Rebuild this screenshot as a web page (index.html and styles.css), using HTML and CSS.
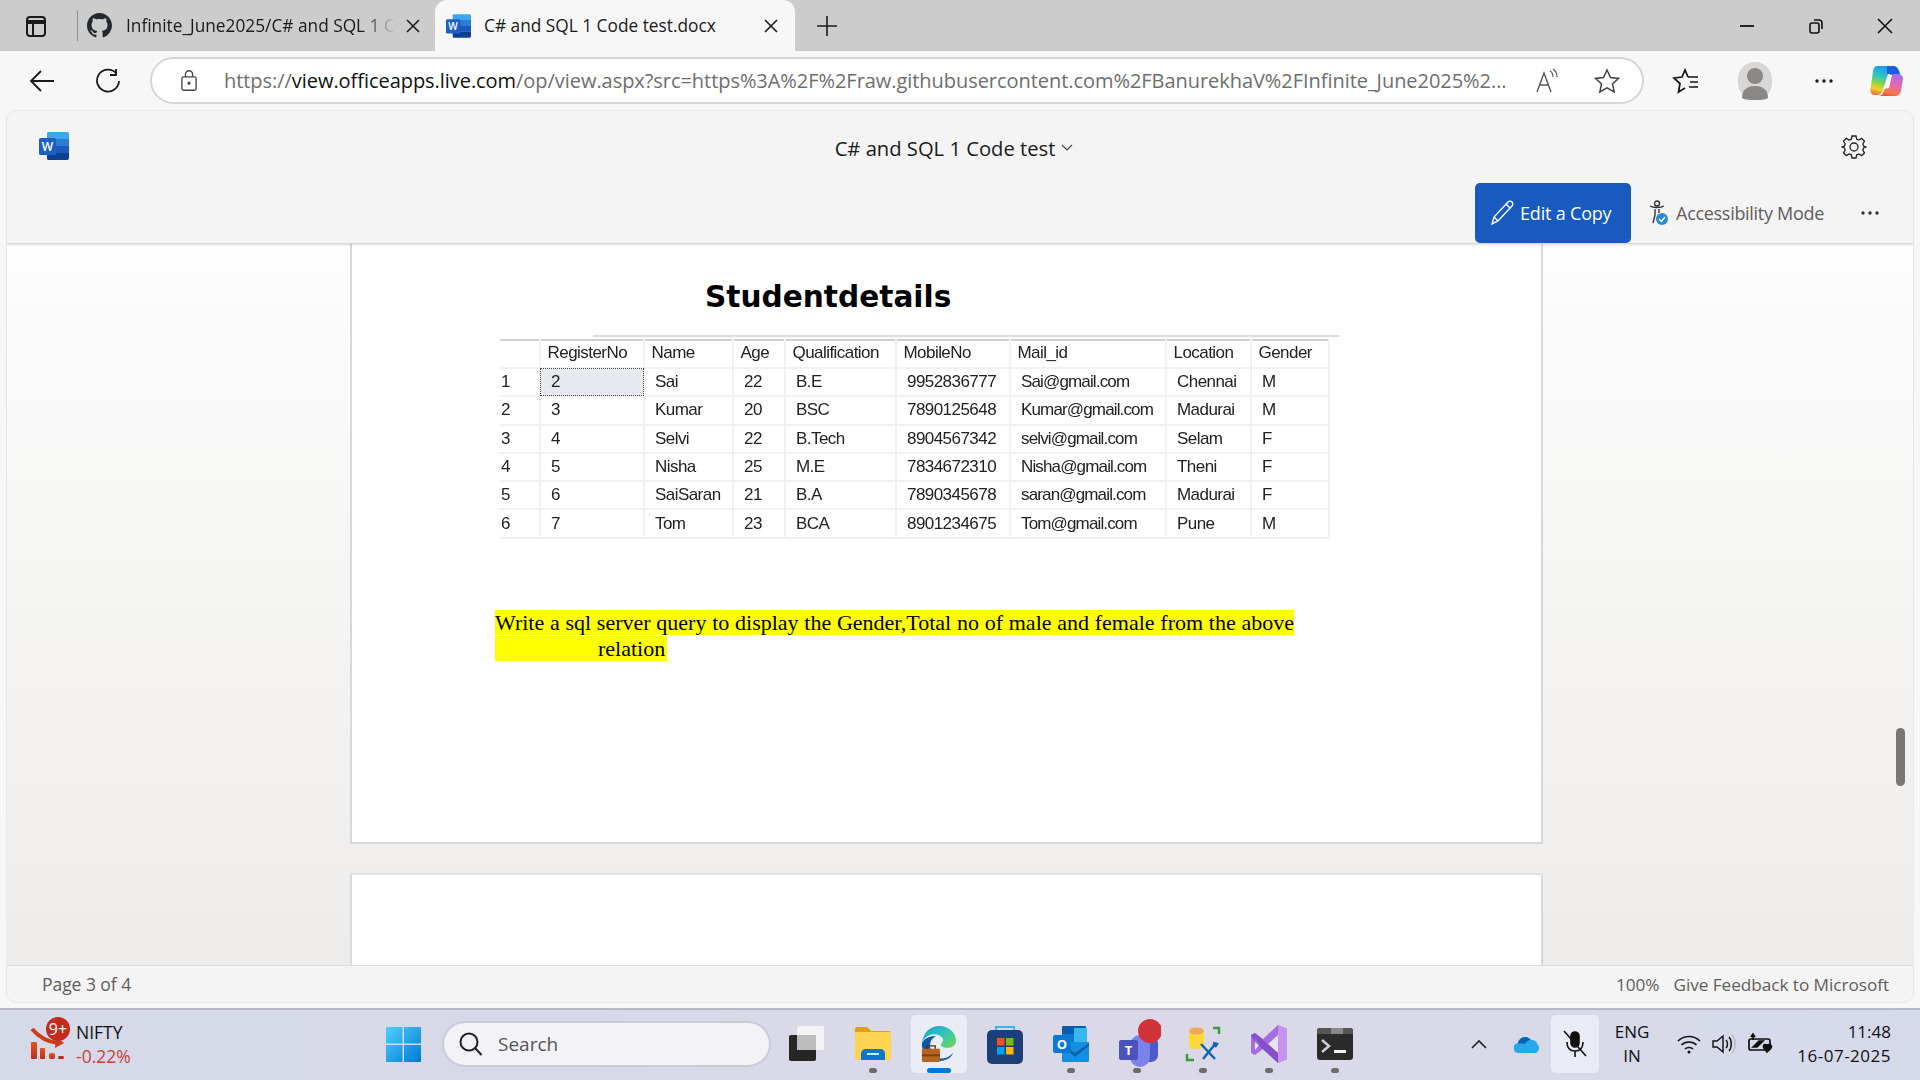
FILE: index.html
```html
<!DOCTYPE html>
<html lang="en">
<head>
    <meta charset="UTF-8">
    <meta name="viewport" content="width=device-width, initial-scale=1.0">
    <title>C# and SQL 1 Code test</title>
    <link rel="stylesheet" href="styles.css">
</head>
<body>
    <svg class="defs" width="0" height="0">
        <defs>
            <symbol id="word" viewBox="0 0 30 28">
                <path d="M9 0h19a2 2 0 0 1 2 2v6H8V1z" fill="#41a5ee"/>
                <rect x="8" y="7" width="22" height="7" fill="#2b7cd3"/>
                <rect x="8" y="14" width="22" height="7" fill="#185abd"/>
                <path d="M8 21h22v5a2 2 0 0 1-2 2H9l-1-1z" fill="#103f91"/>
                <rect x="0" y="6" width="17" height="17" rx="1.5" fill="#1e5fc4"/>
                <text x="8.5" y="19" text-anchor="middle" class="word-w">W</text>
            </symbol>
        </defs>
    </svg>

    <div class="tabstrip">
        <div class="side-btn">
            <svg width="24" height="24" viewBox="0 0 24 24" fill="none" stroke="#1a1a1a" stroke-width="2"><rect x="3" y="3" width="18" height="19" rx="3"/><path d="M3 8h18" stroke-width="4"/><path d="M9 8v14"/></svg>
        </div>
        <div class="tab">
            <svg class="tab-icon" width="25" height="25" viewBox="0 0 16 16" fill="#24292f"><path d="M8 0C3.58 0 0 3.58 0 8c0 3.54 2.29 6.53 5.47 7.59.4.07.55-.17.55-.38 0-.19-.01-.82-.01-1.49-2.01.37-2.53-.49-2.69-.94-.09-.23-.48-.94-.82-1.13-.28-.15-.68-.52-.01-.53.63-.01 1.08.58 1.23.82.72 1.21 1.87.87 2.33.66.07-.52.28-.87.51-1.07-1.78-.2-3.64-.89-3.64-3.95 0-.87.31-1.59.82-2.15-.08-.2-.36-1.02.08-2.12 0 0 .67-.21 2.2.82.64-.18 1.32-.27 2-.27s1.36.09 2 .27c1.53-1.04 2.2-.82 2.2-.82.44 1.1.16 1.92.08 2.12.51.56.82 1.27.82 2.15 0 3.07-1.87 3.75-3.65 3.95.29.25.54.73.54 1.48 0 1.07-.01 1.93-.01 2.2 0 .21.15.46.55.38A8.013 8.013 0 0016 8c0-4.42-3.58-8-8-8z"/></svg>
            <span class="tab-title tab-title-fade">Infinite_June2025/C# and SQL 1 C</span>
            <svg class="tab-close" width="14" height="14" viewBox="0 0 14 14" stroke="#1a1a1a" stroke-width="1.6"><path d="M1 1l12 12M13 1L1 13"/></svg>
        </div>
        <div class="tab tab-active">
            <svg class="tab-icon" width="25" height="24"><use href="#word"/></svg>
            <span class="tab-title">C# and SQL 1 Code test.docx</span>
            <svg class="tab-close" width="14" height="14" viewBox="0 0 14 14" stroke="#1a1a1a" stroke-width="1.6"><path d="M1 1l12 12M13 1L1 13"/></svg>
        </div>
        <div class="new-tab">
            <svg width="22" height="22" viewBox="0 0 22 22" stroke="#1a1a1a" stroke-width="1.6"><path d="M11 1v20M1 11h20"/></svg>
        </div>
        <div class="win-controls">
            <svg width="16" height="16" viewBox="0 0 16 16" stroke="#111" stroke-width="1.8"><path d="M1 8h14"/></svg>
            <svg width="16" height="16" viewBox="0 0 16 16" fill="none" stroke="#111" stroke-width="1.6"><rect x="2" y="5" width="9" height="10" rx="2"/><path d="M6 2h5a3 3 0 0 1 3 3v6"/></svg>
            <svg width="16" height="16" viewBox="0 0 16 16" stroke="#111" stroke-width="1.6"><path d="M1 1l14 14M15 1L1 15"/></svg>
        </div>
    </div>

    <div class="toolbar">
        <div class="tool-btn">
            <svg width="26" height="24" viewBox="0 0 26 24" fill="none" stroke="#1a1a1a" stroke-width="1.8"><path d="M25 12H2M12 2L2 12l10 10"/></svg>
        </div>
        <div class="tool-btn">
            <svg width="26" height="26" viewBox="0 0 26 26" fill="none" stroke="#1a1a1a" stroke-width="1.8"><path d="M21 5a11 11 0 1 0 3 8"/><path d="M21 1v6h-6"/></svg>
        </div>
        <div class="address">
            <svg class="lock" width="16" height="23" viewBox="0 0 18 24" fill="none" stroke="#444" stroke-width="1.5"><rect x="1" y="8" width="16" height="15" rx="2"/><path d="M5 8V5a4 4 0 0 1 8 0v3"/><circle cx="9" cy="15" r="1" fill="#444"/></svg>
            <span class="url"><span class="url-dim">https://</span><span class="url-host">view.officeapps.live.com</span><span class="url-dim">/op/view.aspx?src=https%3A%2F%2Fraw.githubusercontent.com%2FBanurekhaV%2FInfinite_June2025%2...</span></span>
            <svg class="read-aloud" width="26" height="26" viewBox="0 0 26 26" fill="none" stroke="#555" stroke-width="1.4"><path d="M3 24L10 5l7 19M5.500 17h9"/><path d="M16 3c2 1 3 3 3 6M19 1c3 2 4 4 4 8" stroke-width="1.200"/></svg>
            <svg class="star" width="26" height="26" viewBox="0 0 26 26" fill="none" stroke="#444" stroke-width="1.500"><path d="M13 2l3.400 7.500 8.100.9-6 5.500 1.700 8L13 19.800 5.800 23.900l1.700-8-6-5.500 8.100-.9z"/></svg>
        </div>
        <div class="tool-btn">
            <svg width="28" height="26" viewBox="0 0 28 26" fill="none" stroke="#111" stroke-width="1.700"><path d="M16 9l-3-7-3 7-8 1 6 5.500L6.500 24l6.500-4"/><path d="M16 9h10M18 14h8M17 19h9"/></svg>
        </div>
        <div class="tool-btn profile-slot">
            <svg width="34" height="38" viewBox="0 0 34 38"><rect width="34" height="38" rx="17" fill="#d8d7d5"/><circle cx="17" cy="14" r="8" fill="#8a8886"/><path d="M4 36c0-9 6-12 13-12s13 3 13 12c-3 2-8 2-13 2s-10 0-13-2z" fill="#8a8886"/></svg>
        </div>
        <div class="tool-btn">
            <svg width="20" height="6" viewBox="0 0 20 6" fill="#1a1a1a"><circle cx="3" cy="3" r="1.700"/><circle cx="10" cy="3" r="1.700"/><circle cx="17" cy="3" r="1.700"/></svg>
        </div>
        <div class="tool-btn copilot-slot">
            <svg width="34" height="32" viewBox="0 0 34 32">
                <defs>
                    <linearGradient id="cp1" x1="0.5" y1="0" x2="0.3" y2="1"><stop offset="0" stop-color="#1c9cf0"/><stop offset=".35" stop-color="#2fc6c0"/><stop offset=".6" stop-color="#8fd43c"/><stop offset=".8" stop-color="#f2cf2c"/><stop offset="1" stop-color="#f2703a"/></linearGradient>
                    <linearGradient id="cp3" x1="0.7" y1="0" x2="0.3" y2="1"><stop offset="0" stop-color="#a76ae8"/><stop offset=".45" stop-color="#e46ab0"/><stop offset=".8" stop-color="#f47a4a"/><stop offset="1" stop-color="#f0503c"/></linearGradient>
                </defs>
                <path d="M7 1h14l-4 11-4 13c-1 3-3 5-6 5H5c-3 0-5-2-4.500-6L3 6C3.500 3 5 1 7 1z" fill="url(#cp1)"/>
                <path d="M17 1h7c3 0 5 4 6 8H17z" fill="#1a5fe0"/>
                <path d="M20 9h8c3 0 5 2 5 5l-2 12c-.5 3-3 5-6 5H8c3 0 5-2 6-5l3-8z" fill="url(#cp3)"/>
                <path d="M19 10h3l-3 13-6 1z" fill="#fbfbfb"/>
            </svg>
        </div>
    </div>

    <div class="viewer">
        <div class="viewer-head">
            <div class="title-row">
                <svg class="app-icon" width="30" height="28"><use href="#word"/></svg>
                <div class="doc-title">C# and SQL 1 Code test
                    <svg width="12" height="8" viewBox="0 0 12 8" fill="none" stroke="#444" stroke-width="1.100"><path d="M1 1l5 5 5-5"/></svg>
                </div>
                <svg class="gear" width="26" height="26" viewBox="0 0 26 26" fill="none" stroke="#222" stroke-width="1.300"><path d="M11 2h4l.7 3.200 2.200.9 2.800-1.700 2.800 2.800-1.700 2.800.9 2.200L25 13v0l-2.300.8-.9 2.200 1.700 2.800-2.800 2.800-2.800-1.700-2.200.9L15 24h-4l-.7-3.200-2.200-.9-2.800 1.700-2.800-2.800 1.700-2.800-.9-2.200L1 13v0l2.300-.8.9-2.200-1.700-2.800 2.800-2.800 2.800 1.700 2.200-.9z"/><circle cx="13" cy="13" r="4"/></svg>
            </div>
            <div class="command-row">
                <button class="edit-btn">
                    <svg width="25" height="26" viewBox="0 0 25 26" fill="none" stroke="#fff" stroke-width="1.400"><path d="M2 24l2-7L18 2c1-1 3-1 4 0s1 3 0 4L8 21zM4 17l4 4M16 4l4 4"/></svg>
                    Edit a Copy
                </button>
                <div class="access-btn">
                    <svg width="22" height="26" viewBox="0 0 22 26" fill="none" stroke="#333" stroke-width="1.400"><circle cx="9" cy="3.500" r="2.500"/><path d="M2 6c3 2 11 2 14 0M7 9v6l-2 8M11 9v4"/><circle cx="14" cy="19" r="6" fill="#2a8ad4" stroke="none"/><path d="M11 19l2.500 2.500L17 17" stroke="#fff"/></svg>
                    Accessibility Mode
                </div>
                <div class="more-btn">
                    <svg width="20" height="6" viewBox="0 0 20 6" fill="#333"><circle cx="3" cy="3" r="1.700"/><circle cx="10" cy="3" r="1.700"/><circle cx="17" cy="3" r="1.700"/></svg>
                </div>
            </div>
        </div>

        <div class="doc-area">
            <div class="page">
                <h2 class="sheet-title">Studentdetails</h2>
                <div class="grid-wrap">
                    <div class="grid-topline"></div>
                    <table class="grid">
                        <colgroup>
                            <col class="c0"><col class="c1"><col class="c2"><col class="c3"><col class="c4"><col class="c5"><col class="c6"><col class="c7"><col class="c8">
                        </colgroup>
                        <thead>
                            <tr><th></th><th>RegisterNo</th><th>Name</th><th>Age</th><th>Qualification</th><th>MobileNo</th><th>Mail_id</th><th>Location</th><th>Gender</th></tr>
                        </thead>
                        <tbody>
                            <tr><td class="rownum">1</td><td class="focused">2</td><td>Sai</td><td>22</td><td>B.E</td><td>9952836777</td><td class="mail">Sai@gmail.com</td><td>Chennai</td><td>M</td></tr>
                            <tr><td class="rownum">2</td><td>3</td><td>Kumar</td><td>20</td><td>BSC</td><td>7890125648</td><td class="mail">Kumar@gmail.com</td><td>Madurai</td><td>M</td></tr>
                            <tr><td class="rownum">3</td><td>4</td><td>Selvi</td><td>22</td><td>B.Tech</td><td>8904567342</td><td class="mail">selvi@gmail.com</td><td>Selam</td><td>F</td></tr>
                            <tr><td class="rownum">4</td><td>5</td><td>Nisha</td><td>25</td><td>M.E</td><td>7834672310</td><td class="mail">Nisha@gmail.com</td><td>Theni</td><td>F</td></tr>
                            <tr><td class="rownum">5</td><td>6</td><td>SaiSaran</td><td>21</td><td>B.A</td><td>7890345678</td><td class="mail">saran@gmail.com</td><td>Madurai</td><td>F</td></tr>
                            <tr><td class="rownum">6</td><td>7</td><td>Tom</td><td>23</td><td>BCA</td><td>8901234675</td><td class="mail">Tom@gmail.com</td><td>Pune</td><td>M</td></tr>
                        </tbody>
                    </table>
                </div>
                <div class="question">
                    <div class="q-line q-first"><span>Write</span><span>a</span><span>sql</span><span>server</span><span>query</span><span>to</span><span>display</span><span>the</span><span>Gender,Total</span><span>no</span><span>of</span><span>male</span><span>and</span><span>female</span><span>from</span><span>the</span><span>above</span></div>
                    <div class="q-line q-second">relation</div>
                </div>
            </div>
            <div class="page page-next"></div>
            <div class="scroll-thumb"></div>
        </div>

        <div class="status">
            <span>Page 3 of 4</span>
            <span class="status-right"><span>100%</span><span>Give Feedback to Microsoft</span></span>
        </div>
    </div>

    <div class="taskbar">
        <div class="widget">
            <svg width="36" height="36" viewBox="0 0 36 36">
                <defs><linearGradient id="bars" x1="0" y1="0" x2="0" y2="1"><stop offset="0" stop-color="#e2571a"/><stop offset="1" stop-color="#c42b1c"/></linearGradient></defs>
                <path d="M3 3c7 8 15 13 26 14" fill="none" stroke="#cf3a18" stroke-width="4"/>
                <path d="M27 11l8 6-9 5z" fill="#cf3a18"/>
                <rect x="2" y="16" width="6" height="17" rx="1" fill="url(#bars)"/>
                <rect x="11" y="22" width="5" height="11" rx="1" fill="url(#bars)"/>
                <rect x="20" y="27" width="6" height="6" rx="2" fill="url(#bars)"/>
                <rect x="29" y="30" width="6" height="3" rx="1.500" fill="#b5281a"/>
            </svg>
            <span class="badge">9+</span>
            <div class="widget-text">
                <span>NIFTY</span>
                <span class="widget-down">-0.22%</span>
            </div>
        </div>
        <svg class="start" width="35" height="35" viewBox="0 0 35 35">
            <defs><linearGradient id="win" x1="0" y1="0" x2="1" y2="1"><stop offset="0" stop-color="#4fd0fb"/><stop offset="1" stop-color="#0078d4"/></linearGradient></defs>
            <path d="M1 0h15.500v16.500H0V1a1 1 0 0 1 1-1zM18 0h16a1 1 0 0 1 1 1v15.500H18zM0 18h16.500v17H1a1 1 0 0 1-1-1zM18 18h17v16a1 1 0 0 1-1 1H18z" fill="url(#win)"/>
        </svg>
        <div class="search">
            <svg width="26" height="26" viewBox="0 0 26 26" fill="none" stroke="#222" stroke-width="2"><circle cx="11" cy="11" r="8.500"/><path d="M17 17l6.500 7"/></svg>
            <span>Search</span>
        </div>
        <div class="task-icons">
            <div class="task-item">
                <svg width="36" height="36" viewBox="0 0 36 36"><rect x="8" y="0" width="27" height="24" rx="2" fill="#f3f3f5"/><rect x="0" y="9" width="27" height="26" rx="2" fill="#262626"/><rect x="8" y="9" width="19" height="15" fill="#bdbdbd"/></svg>
            </div>
            <div class="task-item has-dot">
                <svg width="38" height="38" viewBox="0 0 38 38"><path d="M1 4a2 2 0 0 1 2-2h10l4 4h18a2 2 0 0 1 2 2v3H1z" fill="#e0a000"/><rect x="1" y="7" width="36" height="28" rx="1" fill="#ffd452"/><path d="M7 35v-6c0-3 2-5 5-5h14c3 0 5 2 5 5v6z" fill="#0a78c8"/><rect x="13" y="28" width="12" height="2" fill="#d7ecfa"/></svg>
            </div>
            <div class="task-item task-active">
                <svg width="36" height="36" viewBox="0 0 38 38">
                    <defs><linearGradient id="edge" x1="0" y1="0" x2="1" y2="1"><stop offset="0" stop-color="#0f9ed8"/><stop offset=".5" stop-color="#36c5b8"/><stop offset="1" stop-color="#6fd84f"/></linearGradient></defs>
                    <path d="M1 18C2 7 10 0 19 0c11 0 18 8 18 15 0 6-5 8-9 8-5 0-8-2-7-4 2-2 4-5 0-8C15 6 4 9 1 18z" fill="url(#edge)"/>
                    <path d="M1 18c3-6 10-8 15-7-6 2-7 7-6 13 1 5 5 9 11 10C10 35 0 29 1 18z" fill="#0c59a4"/>
                    <path d="M20 34c6 1 11-2 14-6-2 6-8 9-16 9z" fill="#0c59a4"/>
                    <rect x="1" y="24" width="19" height="14" rx="1" fill="#b5651d"/><rect x="1" y="30" width="19" height="2" fill="#7a3e10"/><path d="M6 24v-3h9v3" fill="none" stroke="#5c3210" stroke-width="1.500"/>
                </svg>
            </div>
            <div class="task-item">
                <svg width="36" height="40" viewBox="0 0 36 40"><path d="M9 8V3h18v5" fill="none" stroke="#35b8e8" stroke-width="2"/><rect y="6" width="36" height="34" rx="5" fill="#1d3f78"/><rect x="10" y="14" width="7.500" height="7.500" fill="#f25022"/><rect x="19" y="14" width="7.500" height="7.500" fill="#7fba00"/><rect x="10" y="23" width="7.500" height="7.500" fill="#00a4ef"/><rect x="19" y="23" width="7.500" height="7.500" fill="#ffb900"/></svg>
            </div>
            <div class="task-item has-dot">
                <svg width="36" height="36" viewBox="0 0 36 36"><rect x="9" y="0" width="24" height="10" rx="1" fill="#0a5ca8"/><rect x="9" y="8" width="12" height="12" fill="#0a78d4"/><rect x="21" y="2" width="13" height="18" fill="#35b8f0"/><path d="M9 16h27v19a1 1 0 0 1-1 1H10a1 1 0 0 1-1-1z" fill="#1490df"/><path d="M9 17l13 10 14-10v3L22 31 9 20z" fill="#0a64b0"/><rect y="9" width="18" height="18" rx="2" fill="#0a78d4"/><text x="9" y="23" text-anchor="middle" class="icon-letter">O</text></svg>
            </div>
            <div class="task-item has-dot">
                <svg width="48" height="50" viewBox="-6 0 48 50"><rect x="23" y="17" width="16" height="26" rx="7" fill="#5059c9"/><rect x="11" y="16" width="20" height="32" rx="10" fill="#7b83eb"/><rect x="0" y="21" width="19" height="20" rx="2" fill="#4b53bc"/><text x="9.500" y="36" text-anchor="middle" class="icon-letter">T</text><circle cx="31" cy="12" r="12" fill="#d13438"/></svg>
            </div>
            <div class="task-item has-dot">
                <svg width="36" height="36" viewBox="0 0 36 36" fill="none"><path d="M4 6c0-4 15-4 15 0v14c0 4-15 4-15 0z" fill="#ffd83b"/><ellipse cx="11.500" cy="5" rx="7.500" ry="3.500" fill="#f0a858"/><path d="M28 2h6v6M2 28v6h7" stroke="#3c9a3c" stroke-width="2.500"/><path d="M16 18l14 15M31 17L18 33M28 17l4 1-2 3" stroke="#0a64b0" stroke-width="2.400"/></svg>
            </div>
            <div class="task-item has-dot">
                <svg width="36" height="38" viewBox="0 0 36 38"><path d="M27 0l9 4v30l-9 4-15-14-8 6-4-2V10l4-2 8 6z" fill="#a56ee0"/><path d="M27 0l9 4v30l-9 4z" fill="#c594f0"/><path d="M27 10L17 19l10 9z" fill="#e8e4f5"/><path d="M4 13v12l5-6z" fill="#e8e4f5"/><path d="M0 10l4-2 23 20v10L4 17z" fill="#7a3fc0" opacity=".7"/></svg>
            </div>
            <div class="task-item has-dot">
                <svg width="36" height="32" viewBox="0 0 36 32"><rect width="36" height="32" rx="3" fill="#2b2b2b"/><path d="M0 3a3 3 0 0 1 3-3h11v6H0z" fill="#555"/><path d="M14 0h12v6H14z" fill="#888"/><path d="M26 0h7a3 3 0 0 1 3 3v3H26z" fill="#555"/><path d="M5 12l7 6-7 6" fill="none" stroke="#cfcfcf" stroke-width="2.500"/><rect x="17" y="22" width="12" height="3" fill="#f0f0f0"/></svg>
            </div>
        </div>
        <div class="tray">
            <div class="tray-item tray-chevron">
                <svg width="16" height="10" viewBox="0 0 16 10" fill="none" stroke="#222" stroke-width="1.600"><path d="M1 9l7-7 7 7"/></svg>
            </div>
            <div class="tray-item tray-cloud">
                <svg width="26" height="18" viewBox="0 0 26 18"><path d="M5 18a5 5 0 0 1-1-10c1-5 8-9 13-3 4 0 6 2 6 4 3 1 3 9-2 9z" fill="#28a8ea"/><path d="M4 8c1-5 8-9 13-3-3 0-5 2-6 4-4-1-6 0-7-1z" fill="#0364b8"/></svg>
            </div>
            <div class="tray-item tray-mic">
                <svg width="26" height="28" viewBox="0 0 26 28" fill="none" stroke="#111" stroke-width="1.600"><rect x="9" y="2" width="8" height="15" rx="4" fill="#111"/><path d="M5 12c0 6 3 9 8 9s8-3 8-9M13 21v6"/><path d="M2 1l22 25"/></svg>
            </div>
            <div class="tray-lang"><span>ENG</span><span>IN</span></div>
            <div class="tray-item tray-wifi">
                <svg width="24" height="20" viewBox="0 0 24 20" fill="none" stroke="#111" stroke-width="1.600"><path d="M1 7c6-6 16-6 22 0M4.500 11c4-4 11-4 15 0M8 15c2-2 6-2 8 0"/><circle cx="12" cy="18" r="1.500" fill="#111" stroke="none"/></svg>
            </div>
            <div class="tray-item tray-vol">
                <svg width="24" height="20" viewBox="0 0 24 20" fill="none" stroke="#111" stroke-width="1.400"><path d="M1 7h4l6-5v16l-6-5H1z"/><path d="M14 6c2 2 2 6 0 8M17 3c3 3 3 11 0 14"/><path d="M20 1c4 4 4 14 0 18" stroke="#bbb"/></svg>
            </div>
            <div class="tray-item tray-batt">
                <svg width="26" height="24" viewBox="0 0 26 24" fill="none" stroke="#111" stroke-width="1.700"><path d="M5 3v5M3 5l2-3 2 3"/><rect x="1" y="7" width="21" height="11" rx="2"/><path d="M5 15l6-6h4l-6 6z" fill="#111"/><path d="M16 16l3 4 4-4c2-3-3-5-4-2-1-3-5-1-3 2z" fill="#111"/></svg>
            </div>
            <div class="clock"><span>11:48</span><span class="clock-date">16-07-2025</span></div>
        </div>
    </div>
</body>
</html>
```

FILE: styles.css
```css
* {
    box-sizing: border-box;
}
html, body {
    height: 100%;
}
body {
    margin: 0;
    overflow: hidden;
    display: flex;
    flex-direction: column;
    background-color: #f7f7f7;
    color: #1a1a1a;
    font-family: "Open Sans", "Noto Sans", sans-serif;
}
svg {
    display: block;
    flex: none;
}
.defs {
    position: absolute;
}
.word-w {
    font-family: "Open Sans", sans-serif;
    font-size: 12px;
    font-weight: 600;
    fill: #fff;
}
.icon-letter {
    font-family: "Open Sans", sans-serif;
    font-size: 13px;
    font-weight: 700;
    fill: #fff;
}

/* tab strip */
.tabstrip {
    height: 51px;
    flex: none;
    display: flex;
    align-items: center;
    background-color: #cccccc;
}
.side-btn {
    width: 77px;
    height: 100%;
    display: flex;
    align-items: center;
    padding-left: 24px;
}
.tab {
    width: 358px;
    height: 100%;
    display: flex;
    align-items: center;
    padding-left: 10px;
    font-size: 17.3px;
    position: relative;
}
.tab::before {
    content: "";
    position: absolute;
    left: 0;
    top: 10px;
    bottom: 10px;
    width: 1px;
    background-color: #8f8f8f;
}
.tab-active {
    width: 360px;
    background-color: #f7f7f7;
    border-radius: 12px 12px 0 0;
    padding-left: 11px;
}
.tab-active::before {
    display: none;
}
.tab-icon {
    margin-right: 14px;
}
.tab-active .tab-icon {
    margin-right: 13px;
}
.tab-title {
    width: 269px;
    white-space: nowrap;
}
.tab-title-fade {
    -webkit-mask-image: linear-gradient(90deg, #000 88%, transparent);
    mask-image: linear-gradient(90deg, #000 88%, transparent);
}
.tab-close {
    margin-left: 11px;
}
.tab-active .tab-title {
    width: 280px;
}
.tab-active .tab-close {
    margin-left: 0;
}
.new-tab {
    width: 22px;
    margin-left: 21px;
}
.win-controls {
    margin-left: auto;
    display: flex;
    gap: 53px;
    padding-right: 27px;
}

/* address bar row */
.toolbar {
    height: 59px;
    flex: none;
    display: flex;
    align-items: center;
    padding-left: 9px;
}
.tool-btn {
    width: 66px;
    display: flex;
    justify-content: center;
}
.profile-slot {
    width: 72px;
}
.copilot-slot {
    width: 60px;
}
.address {
    width: 1494px;
    height: 47px;
    margin: 0 9px 0 9px;
    display: flex;
    align-items: center;
    padding-left: 29px;
    background-color: #fff;
    border: 2px solid #d6d6d6;
    border-radius: 24px;
}
.url {
    margin-left: 27px;
    width: 1281px;
    font-size: 20px;
    white-space: nowrap;
    letter-spacing: -0.05px;
}
.url-dim {
    color: #6e6e6e;
}
.url-host {
    color: #111;
}
.read-aloud {
    margin-left: 29px;
}
.star {
    margin-left: 34px;
}

/* word viewer */
.viewer {
    flex: none;
    height: 893px;
    margin: 0 6px 5px;
    display: flex;
    flex-direction: column;
    background-color: #f4f4f4;
    border: 1px solid #e8e8e8;
    border-radius: 10px;
    overflow: hidden;
}
.viewer-head {
    height: 133px;
    flex: none;
    border-bottom: 1px solid #d8d8d8;
    box-shadow: 0 1px 2px rgba(0, 0, 0, 0.12);
    position: relative;
    z-index: 1;
}
.title-row {
    height: 72px;
    display: flex;
    align-items: center;
    padding: 2px 46px 0 32px;
}
.app-icon {
    margin-top: -4px;
}
.gear {
    margin-top: -3px;
}
.doc-title {
    flex: 1;
    display: flex;
    align-items: center;
    justify-content: center;
    gap: 6px;
    padding-right: 2px;
    font-size: 20.2px;
}
.command-row {
    height: 60px;
    display: flex;
    align-items: stretch;
    justify-content: flex-end;
}
.edit-btn {
    width: 156px;
    display: flex;
    align-items: center;
    gap: 5px;
    padding: 0 0 0 15px;
    background-color: #185abd;
    color: #fff;
    border: none;
    border-radius: 5px;
    font-family: inherit;
    font-size: 18px;
    letter-spacing: -0.2px;
}
.access-btn {
    margin-left: 17px;
    display: flex;
    align-items: center;
    gap: 6px;
    color: #605e5c;
    font-size: 18px;
    letter-spacing: -0.3px;
}
.more-btn {
    width: 89px;
    display: flex;
    align-items: center;
    padding-left: 36px;
}

/* document */
.doc-area {
    flex: 1;
    min-height: 0;
    position: relative;
    overflow: hidden;
    padding: 0 370px 0 343px;
    background: linear-gradient(180deg, #fdfdfd, #edecea);
}
.page {
    height: 600px;
    background-color: #fff;
    border: 2px solid #d9d9dc;
    border-top: none;
    padding: 38px 0 0 143px;
}
.page-next {
    height: 100px;
    margin-top: 29px;
    border-top: 2px solid #e2e2e4;
}
.sheet-title {
    margin: 0 0 0 210px;
    font-family: "DejaVu Sans", Verdana, sans-serif;
    font-size: 29.6px;
    line-height: 30px;
    font-weight: 700;
    color: #000;
}
.grid-wrap {
    margin: 23px 0 0 5px;
    filter: blur(0.45px);
}
.grid-topline {
    height: 2px;
    margin-left: 93px;
    width: 746px;
    background-color: #dcdcdc;
}
.grid {
    margin-top: 2px;
    border-collapse: collapse;
    table-layout: fixed;
    width: 829px;
    border-top: 2px solid #cfcfd4;
    font-family: "Liberation Sans", Arial, sans-serif;
    font-size: 17px;
    letter-spacing: -0.55px;
    color: #222;
}
.c0 { width: 40px; }
.c1 { width: 104px; }
.c2 { width: 89px; }
.c3 { width: 52px; }
.c4 { width: 111px; }
.c5 { width: 114px; }
.c6 { width: 156px; }
.c7 { width: 85px; }
.c8 { width: 78px; }
.grid th {
    height: 28px;
    padding: 0 0 2px 6.5px;
    text-align: left;
    font-weight: 400;
    border-right: 2px solid #f1f1f1;
    border-bottom: 2px solid #f1f1f1;
}
.grid td {
    height: 28.3px;
    padding: 0 0 0 10px;
    border-right: 2px solid #f1f1f1;
    border-bottom: 2px solid #f1f1f1;
}
.grid td.rownum {
    padding-left: 1px;
}
.grid td.mail {
    letter-spacing: -0.85px;
}
.grid td.focused {
    background-color: #e6eaee;
    outline: 1px dotted #444;
    outline-offset: -1px;
}
.question {
    margin-top: 71px;
    width: 799px;
    font-family: "Liberation Serif", "Times New Roman", serif;
    font-size: 22px;
    color: #000;
}
.q-line {
    height: 25px;
    line-height: 25px;
    background-color: #ffff00;
    white-space: nowrap;
}
.q-first {
    display: flex;
    justify-content: space-between;
    margin-bottom: 1px;
}
.q-second {
    width: 172px;
    padding-left: 103px;
}
.scroll-thumb {
    position: absolute;
    top: 484px;
    right: 8px;
    width: 9px;
    height: 58px;
    background-color: #787776;
    border-radius: 5px;
}

/* status bar */
.status {
    height: 37px;
    flex: none;
    display: flex;
    align-items: center;
    justify-content: space-between;
    padding: 0 24px 0 35px;
    border-top: 1px solid #dcdcdc;
    color: #605e5c;
    font-size: 17.5px;
    letter-spacing: -0.05px;
}
.status-right {
    display: flex;
    gap: 14px;
    font-size: 17.2px;
}

/* windows taskbar */
.taskbar {
    flex: 1;
    min-height: 0;
    display: flex;
    align-items: center;
    padding-bottom: 2px;
    border-top: 2px solid #b6b8c6;
    background: linear-gradient(90deg, #d5d9e8, #dbd9e8 60%, #d9d9e8 75%, #d5daea);
}
.widget {
    width: 356px;
    margin-left: 29px;
    display: flex;
    align-items: center;
    position: relative;
}
.badge {
    position: absolute;
    left: 17px;
    top: -3px;
    width: 24px;
    height: 24px;
    display: flex;
    align-items: center;
    justify-content: center;
    border-radius: 50%;
    background-color: #c42b1c;
    color: #fff;
    font-size: 16px;
}
.widget-text {
    margin-left: 11px;
    display: flex;
    flex-direction: column;
    font-size: 17.5px;
    line-height: 24px;
    color: #111;
}
.widget-down {
    color: #c9403a;
}
.start {
    margin-left: 1px;
}
.search {
    width: 329px;
    height: 46px;
    margin-left: 21px;
    display: flex;
    align-items: center;
    gap: 14px;
    padding-left: 14px;
    border-radius: 23px;
    background-color: #f2f2f7;
    border: 2px solid #c9cbd9;
    color: #555;
    font-size: 19px;
}
.task-icons {
    margin-left: 3px;
    display: flex;
}
.task-item {
    width: 66px;
    height: 58px;
    display: flex;
    align-items: center;
    justify-content: center;
    position: relative;
}
.has-dot::after {
    content: "";
    position: absolute;
    left: 29px;
    bottom: 0;
    width: 8px;
    height: 5px;
    border-radius: 3px;
    background-color: #6b6b6b;
}
.task-active::before {
    content: "";
    position: absolute;
    top: 0;
    bottom: 0;
    left: 5px;
    right: 5px;
    background-color: #ebedf6;
    border-radius: 5px;
}
.task-active svg {
    position: relative;
}
.task-active::after {
    content: "";
    position: absolute;
    left: 21px;
    bottom: 0;
    width: 24px;
    height: 5px;
    border-radius: 3px;
    background-color: #0078d4;
}
.tray {
    margin-left: auto;
    display: flex;
    align-items: center;
    padding-right: 29px;
}
.tray-item {
    width: 48px;
    height: 58px;
    display: flex;
    align-items: center;
    justify-content: center;
}
.tray-mic {
    background-color: #e9ebf5;
    border-radius: 5px;
}
.tray-vol {
    width: 22px;
}
.tray-batt {
    width: 52px;
}
.tray-lang, .clock {
    display: flex;
    flex-direction: column;
    font-size: 17px;
    line-height: 24px;
    color: #111;
}
.tray-lang {
    width: 66px;
    align-items: center;
}
.clock {
    width: 104px;
    align-items: flex-end;
}
.clock-date {
    letter-spacing: 0.5px;
}
```
